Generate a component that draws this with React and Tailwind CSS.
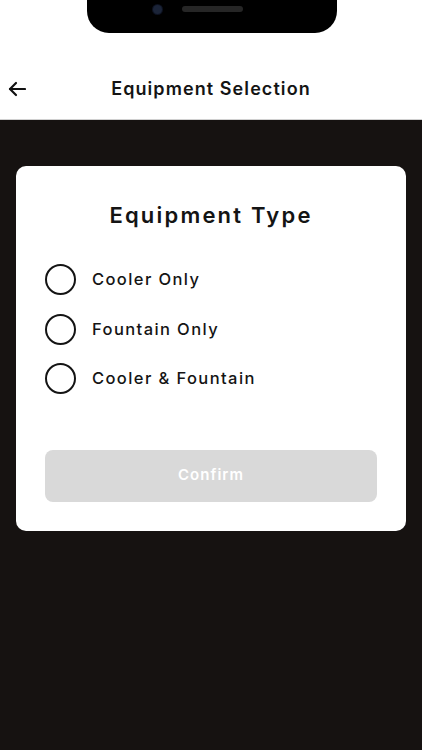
import React, { useState } from 'react';

const OPTIONS = ['Cooler Only', 'Fountain Only', 'Cooler & Fountain'];

function BackArrow() {
  return (
    <svg width="18" height="16" viewBox="0 0 18 16" fill="none" stroke="#111" strokeWidth="2.2" strokeLinecap="round" strokeLinejoin="round">
      <path d="M17 8H2" />
      <path d="M8 2L2 8l6 6" />
    </svg>
  );
}

export default function App() {
  const [selected, setSelected] = useState(null);

  return (
    <div className="relative flex min-h-[750px] flex-col bg-[#161211] font-['Inter',sans-serif]">
      {/* Phone notch */}
      <div className="absolute left-[87px] top-0 z-10 h-[33px] w-[250px] rounded-b-[22px] bg-black">
        <div className="absolute left-[66px] top-[5px] h-[9px] w-[9px] rounded-full bg-[#1b2438] ring-1 ring-[#0d1220]" />
        <div className="absolute left-[95px] top-[6px] h-[6px] w-[61px] rounded-full bg-[#262626]" />
      </div>

      {/* Header */}
      <header className="relative flex h-[120px] items-end justify-center border-b border-[#d0d0d0] bg-white pb-[18px]">
        <button className="absolute bottom-[20px] left-[6px] p-0.5">
          <BackArrow />
        </button>
        <h1 className="text-[18px] font-semibold leading-[24px] tracking-[0.06em] text-[#141414]">
          Equipment Selection
        </h1>
      </header>

      {/* Content */}
      <main className="px-4 pt-[46px]">
        <div className="rounded-[10px] bg-white px-[29px] pb-[29px] pt-[34px]">
          <h2 className="text-center text-[22px] font-semibold leading-[30px] tracking-[0.1em] text-[#141414]">
            Equipment Type
          </h2>

          <div className="mt-[25px] flex flex-col">
            {OPTIONS.map((opt) => (
              <button
                key={opt}
                onClick={() => setSelected(opt)}
                className="flex h-[49.5px] items-center gap-[16px] text-left"
              >
                <span className="flex h-[31px] w-[31px] items-center justify-center rounded-full border-2 border-[#141414]">
                  {selected === opt && <span className="h-[15px] w-[15px] rounded-full bg-[#141414]" />}
                </span>
                <span className="text-[16.5px] font-medium tracking-[0.085em] text-[#141414]">{opt}</span>
              </button>
            ))}
          </div>

          <button
            disabled={!selected}
            className="mt-[46px] flex h-[52px] w-full items-center justify-center rounded-[8px] bg-[#d9d9d9] text-[15px] font-semibold tracking-[0.07em] text-white"
          >
            Confirm
          </button>
        </div>
      </main>
    </div>
  );
}
